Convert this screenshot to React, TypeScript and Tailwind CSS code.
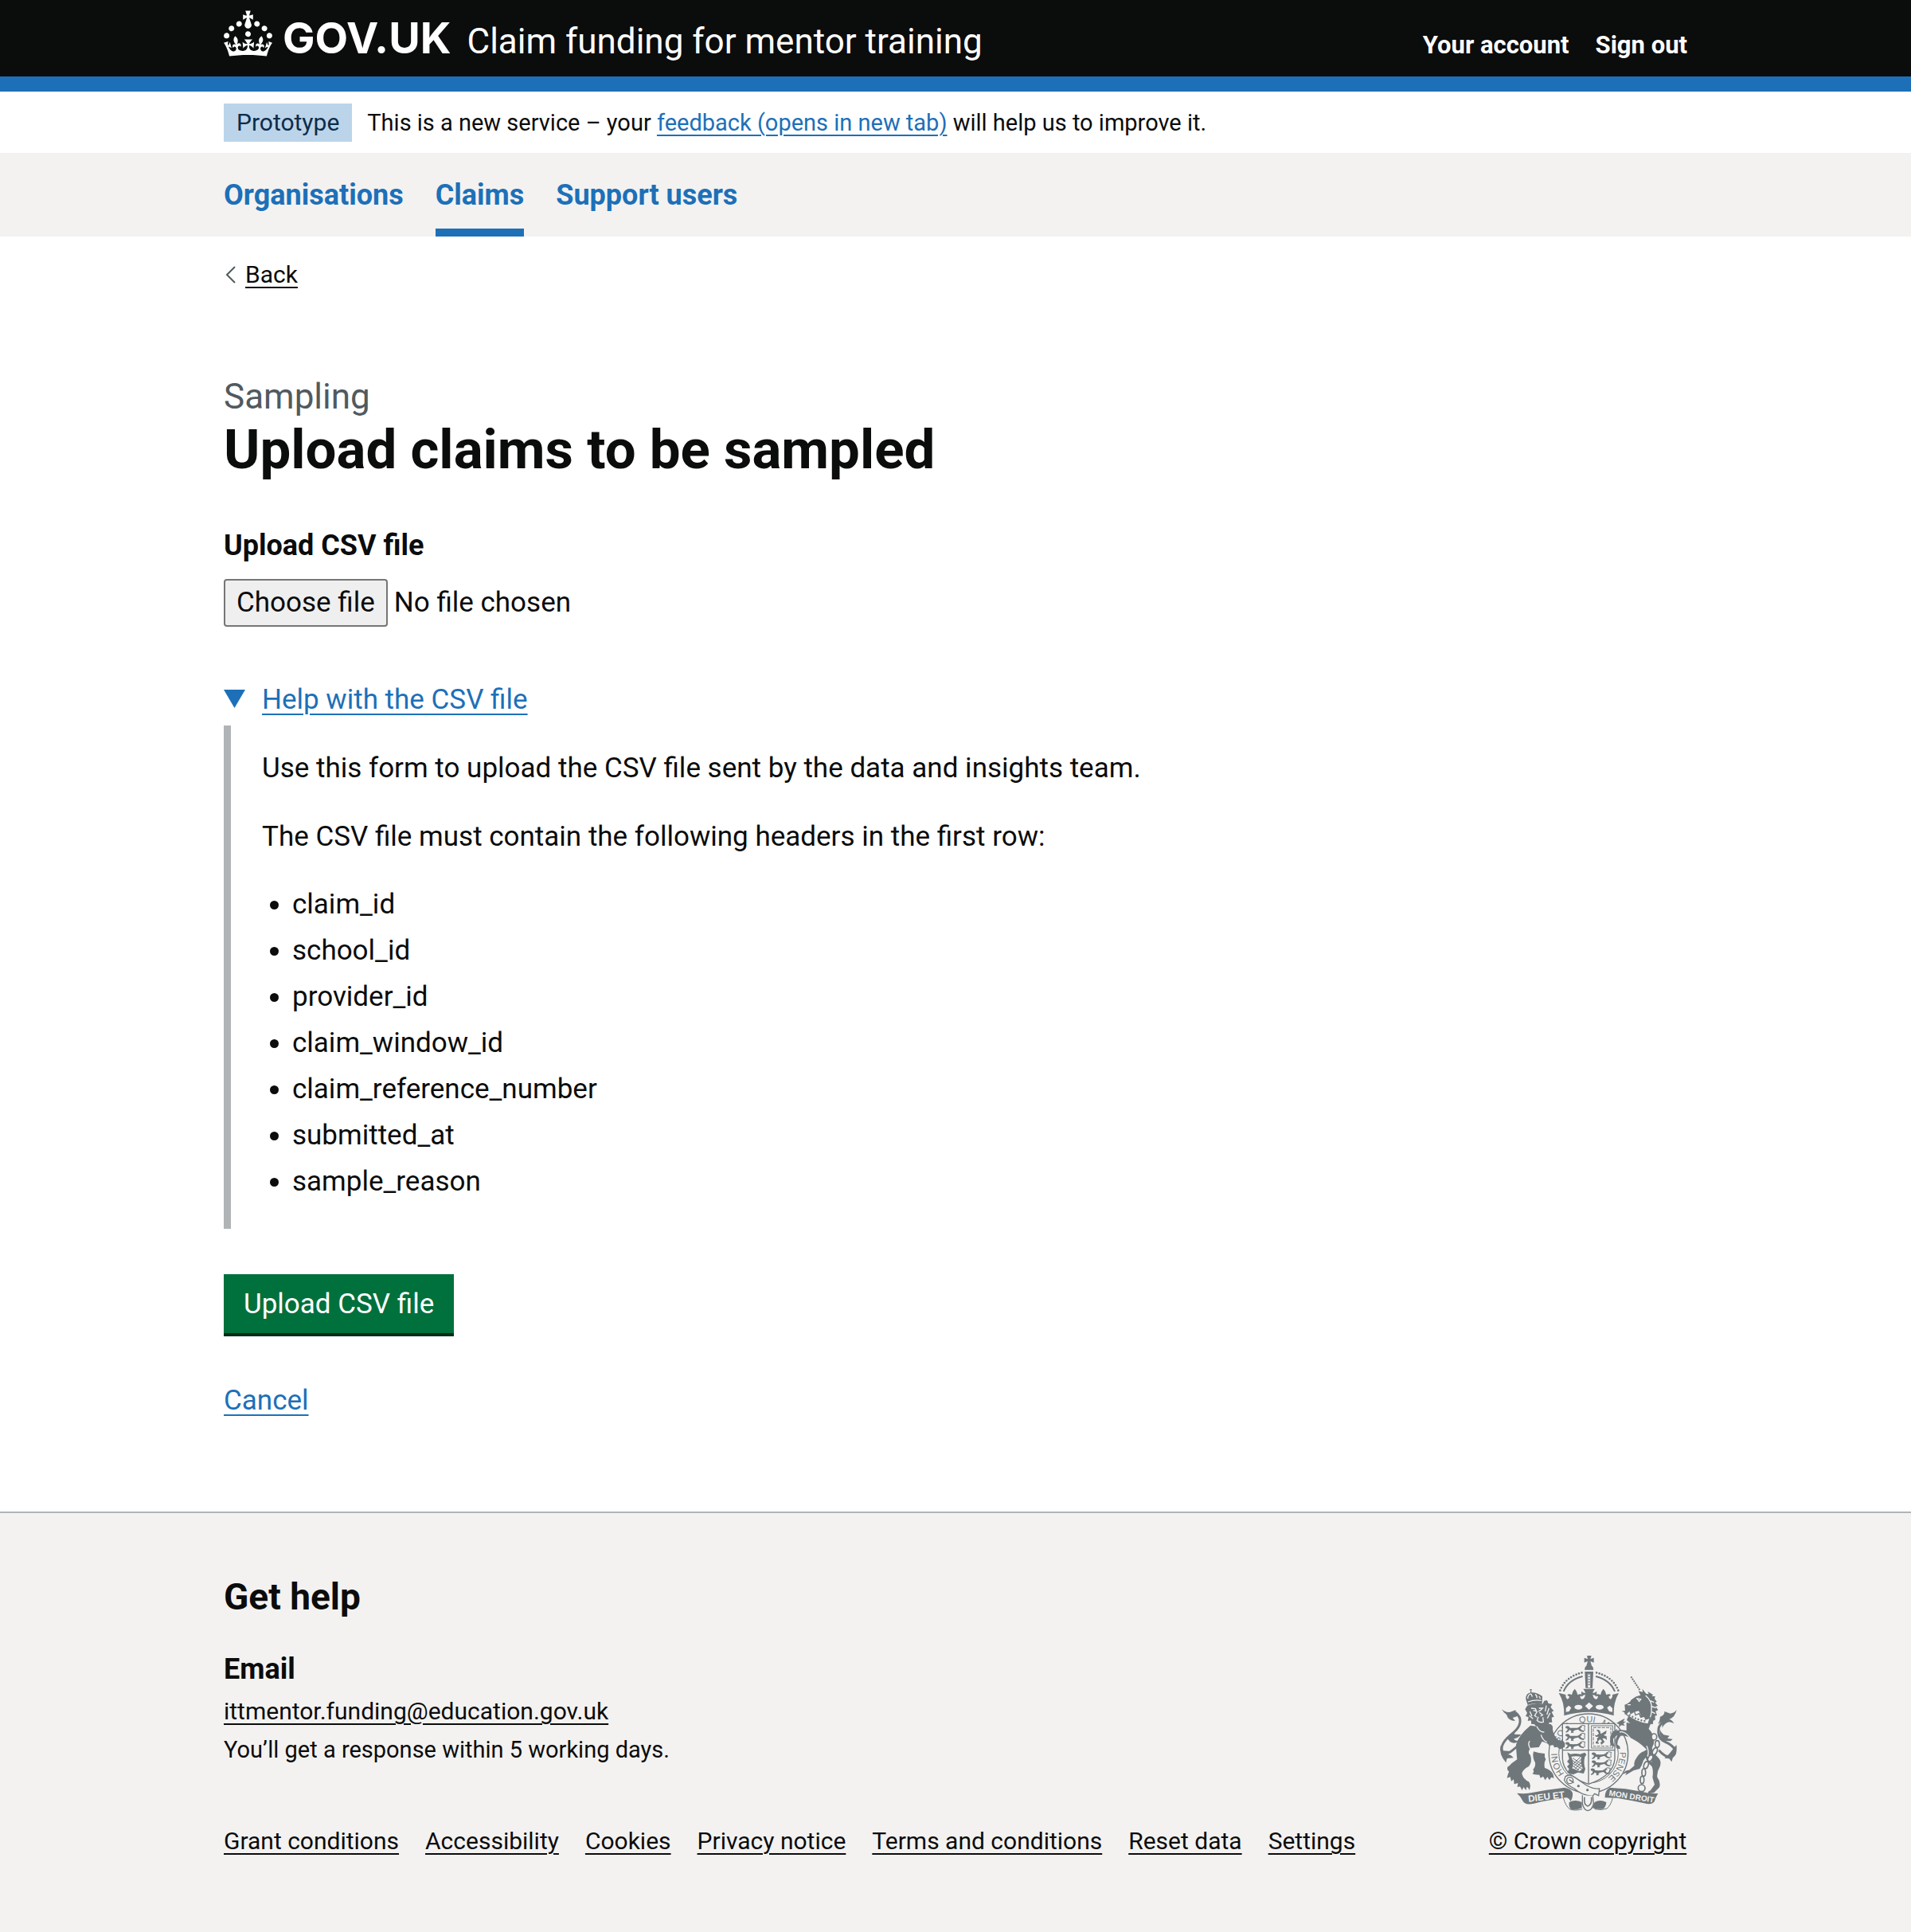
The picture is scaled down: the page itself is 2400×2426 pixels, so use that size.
import type { ReactNode } from "react";

const csvHeaders = [
  "claim_id",
  "school_id",
  "provider_id",
  "claim_window_id",
  "claim_reference_number",
  "submitted_at",
  "sample_reason",
];

const footerLinks = [
  "Grant conditions",
  "Accessibility",
  "Cookies",
  "Privacy notice",
  "Terms and conditions",
  "Reset data",
  "Settings",
];

const navItems = [
  { label: "Organisations", current: false },
  { label: "Claims", current: true },
  { label: "Support users", current: false },
];

function Container({ children, className = "" }: { children: ReactNode; className?: string }) {
  return <div className={`mx-auto w-full max-w-[1838px] ${className}`}>{children}</div>;
}

function CrownLogo() {
  return (
    <svg viewBox="0 0 32 30" className="-mt-[5px] h-[58px] w-[61px] shrink-0 self-start fill-white" aria-hidden="true">
      <path d="M22.6 10.4c-1 .4-2-.1-2.4-1-.4-.9.1-2 1-2.4.9-.4 2 .1 2.4 1s-.1 2-1 2.4m-5.9 6.7c-.9.4-2-.1-2.4-1-.4-.9.1-2 1-2.4.9-.4 2 .1 2.4 1s-.1 2-1 2.4m10.8-3.7c-1 .4-2-.1-2.4-1-.4-.9.1-2 1-2.4.9-.4 2 .1 2.4 1s0 2-1 2.4m3.3 4.8c-1 .4-2-.1-2.4-1-.4-.9.1-2 1-2.4.9-.4 2 .1 2.4 1s-.1 2-1 2.4M17 4.7l2.3 1.2V2.5l-2.3.7-.2-.2.9-3h-3.4l.9 3-.2.2c-.1.1-2.3-.7-2.3-.7v3.4L15 4.7c.1.1.1.2.2.2l-1.3 4c-.1.2-.1.4-.1.6 0 1.1.8 2 1.9 2.2h.7c1-.2 1.9-1.1 1.9-2.1 0-.2 0-.4-.1-.6l-1.3-4c-.1-.2 0-.2.1-.3m-7.6 5.7c.9.4 2-.1 2.4-1 .4-.9-.1-2-1-2.4-.9-.4-2 .1-2.4 1s0 2 1 2.4m-5 3c.9.4 2-.1 2.4-1 .4-.9-.1-2-1-2.4-.9-.4-2 .1-2.4 1s.1 2 1 2.4m-3.2 4.8c.9.4 2-.1 2.4-1 .4-.9-.1-2-1-2.4-.9-.4-2 .1-2.4 1s0 2 1 2.4m14.8 11c4.4 0 8.6.3 12.3.8 1.1-4.5 2.4-7 3.7-8.8l-2.5-.9c.2 1.3.3 1.9 0 2.7-.4-.4-.8-1.1-1.1-2.3l-1.2 4c.7-.5 1.3-.8 2-.9-1.1 2.5-2.6 3.1-3.5 3-1.1-.2-1.7-1.2-1.5-2.1.3-1.2 1.5-1.5 2.1-.1 1.1-2.3-.8-3-2-2.3 1.9-1.9 2.1-3.5.6-5.6-2.1 1.6-2.1 3.2-1.2 5.5-1.2-1.4-3.2-.6-2.5 1.6.9-1.4 2.1-.5 1.9.8-.2 1.1-1.7 2.1-3.5 1.9-2.7-.2-2.9-2.1-2.9-3.6.7-.1 1.9.5 2.9 1.9l.4-4.3c-1.1 1.1-2.1 1.4-3.2 1.4.4-1.2 2.1-3 2.1-3h-5.4s1.7 1.9 2.1 3c-1.1 0-2.1-.2-3.2-1.4l.4 4.3c1-1.4 2.2-2 2.9-1.9-.1 1.5-.2 3.4-2.9 3.6-1.9.2-3.4-.8-3.5-1.9-.2-1.3 1-2.2 1.9-.8.7-2.3-1.2-3-2.5-1.6.9-2.2.9-3.9-1.2-5.5-1.5 2-1.3 3.7.6 5.6-1.2-.7-3.1 0-2 2.3.6-1.4 1.8-1.1 2.1.1.2.9-.3 1.9-1.5 2.1-.9.2-2.4-.5-3.5-3 .6 0 1.2.3 2 .9l-1.2-4c-.3 1.1-.7 1.9-1.1 2.3-.3-.8-.2-1.4 0-2.7l-2.9.9C1.3 23 2.6 25.5 3.7 30c3.7-.5 7.9-.8 12.3-.8" />
    </svg>
  );
}

/* One walking lion of the English quarters, drawn in a 84 × 28 box. */
function PassantLion({ x, y }: { x: number; y: number }) {
  return (
    <g transform={`translate(${x} ${y})`}>
      <path d="M3 3q8-5 14 0l3 5q14 1 28 0l10-5q8-3 8 3-5 0-7 4l4 6 10 3-2 5-12-3-8-7-14 3-6 6 5 3-12 1 1-8-7-3-5 7-9 3 1-5 5-3 1-7-7-2z" />
      <path d="M57 3q8-8 20-3-3 8-2 12 3 6-3 10" fill="none" stroke="#6f777b" strokeWidth="3" />
    </g>
  );
}

/* Start of each motto word, measured along the garter's text path. */
const garterWords = [
  { word: "HONI", offset: 37 },
  { word: "SOIT", offset: 158 },
  { word: "QUI", offset: 270 },
  { word: "MAL", offset: 352 },
  { word: "PENSE", offset: 484 },
];

function RoyalArms() {
  const ink = "#6f777b";
  const paper = "#f3f2f1";
  return (
    <svg viewBox="57 43 750 603" className="h-auto w-full" fill={ink} role="img" aria-label="Royal coat of arms">
      {/* Orb and cross */}
      <path d="M429 52h17l-4 13 13-5v18l-13-5 5 17q8 6 6 17h-32q-2-11 6-17l5-17-13 5V60l13 5z" />
      <path d="M422 107h31" stroke={paper} strokeWidth="2" />
      {/* Arches */}
      <path d="M328 183Q350 128 419 114M547 183Q525 128 456 114" fill="none" stroke={ink} strokeWidth="8" strokeLinecap="round" strokeDasharray="0 11" />
      <path d="M341 187Q358 144 413 130M534 187Q517 144 462 130" fill="none" stroke={ink} strokeWidth="6" />
      <path d="M421 112h32l-3 62h-26z" />
      <path d="M437 120v52" stroke={paper} strokeWidth="9" />
      <path d="M437 121v50" stroke={ink} strokeWidth="6" strokeLinecap="round" strokeDasharray="0 10" />
      {/* Crown rim, crosses and fleurs */}
      <path d="M325 193l24 6q-1 12 7 17 7-3 7-10-6-2-8-7 8-5 17 1 1-13 11-23 10 10 11 23 9-6 17-1-2 5-8 7 1 9 8 10 10-2 12-17-8 1-14 8l-1-21q8 7 15 7-1-7-8-16h44q-7 9-8 16 7 0 15-7l-1 21q-6-7-14-8 2 15 12 17 7-1 8-10-6-2-8-7 8-5 17 1 1-13 11-23 10 10 11 23 9-6 17-1-2 5-8 7 0 7 7 10 8-5 7-17l24-6q-21 35-19 85-91-27-187 0 2-50-20-85z" />
      <path d="M437 228l15 14-15 14-15-14zM350 250l10-10 10 8-8 14-12 2zM525 250l-10-10-10 8 8 14 12 2z" fill={paper} />
      <ellipse cx="397" cy="246" rx="15" ry="9" fill={paper} />
      <ellipse cx="477" cy="246" rx="15" ry="9" fill={paper} />

      {/* Garter */}
      <circle cx="435" cy="420" r="149" fill={paper} stroke={ink} strokeWidth="4" />
      <circle cx="435" cy="420" r="112" fill="none" stroke={ink} strokeWidth="3" />
      <path id="garter-motto" d="M372 520A118 118 0 1 1 466 534" fill="none" />
      {garterWords.map(({ word, offset }) => (
        <text key={word} fontFamily="Liberation Sans" fontSize="33" fill={ink}>
          <textPath href="#garter-motto" startOffset={offset}>
            {word}
          </textPath>
        </text>
      ))}

      {/* Shield */}
      <path d="M337 308H534V440Q530 505 435 536 340 505 337 440Z" fill={paper} stroke={ink} strokeWidth="4" />
      <path d="M435 308V534M337 408H534" stroke={ink} strokeWidth="4" />
      <PassantLion x={345} y={316} />
      <PassantLion x={345} y={346} />
      <PassantLion x={345} y={377} />
      <PassantLion x={444} y={416} />
      <PassantLion x={444} y={446} />
      <PassantLion x={440} y={476} />
      {/* Scottish quarter */}
      <rect x="446" y="316" width="80" height="84" fill="none" stroke={ink} strokeWidth="3" />
      <rect x="453" y="323" width="66" height="70" fill="none" stroke={ink} strokeWidth="3" strokeDasharray="12 4" />
      <path d="M464 333q10-6 15 4l2 10 13-8 9-6-2 13-9 5 11 5 1 14-8-7-9 1 9 13-13 11-3-8 6-6-8-7-8 8 5 9-13-1 0-6 6-4-1-9 7-7-10 1-6-7 8 1 8-6-4-8z" />
      {/* Harp */}
      <path d="M355 416l12 7q20-4 36 0l18-6 6 8-6 9q-6 24 2 45l-6 17-22-4-18 8-22-7 7-14-8-9 9-10-9-9 8-10z" />
      <path d="M370 432q24-4 38 2-5 20 5 43l-12 11-28-12q10-16-3-44z" fill={paper} />
      <path d="M376 438l32 22M373 446l37 24M376 457l34 22M376 468l24 16M404 434l-26 26M409 440l-31 32M411 450l-28 30M413 462l-21 22" stroke={ink} strokeWidth="3" />

      {/* Garter strap and buckle */}
      <path d="M348 507q15-10 30 0l50 34q25 14 48 12l-3 26-15-7-8 9q-40-2-68-28-34-18-38-32z" fill={paper} stroke={ink} strokeWidth="4" />
      <circle cx="365" cy="522" r="12" fill="none" stroke={ink} strokeWidth="4" />
      <path d="M362 519l18 12" stroke={ink} strokeWidth="4" />
      <circle cx="397" cy="543" r="5" />
      <circle cx="431" cy="558" r="5" />
      <path d="M412 578v32q6 24 20 26 16-2 22-26l-3-30" fill={paper} stroke={ink} strokeWidth="4" />
      <path d="M420 585q-4 30 12 34 17-6 14-34" fill="none" stroke={ink} strokeWidth="5" />

      {/* Lion: tail */}
      <path d="M160 266C188 288 180 318 152 342 126 362 100 388 110 414 122 438 158 402 206 358" fill="none" stroke={ink} strokeWidth="9" />
      <path d="M108 253q14 14 30 12 14-5 22-8l3 15q15 14 18 30l-14-22-18 6 10 12q-26 0-33-24-12-8-18-21zM127 362q20-6 26-26l4 12 24 1q-12 14-27 16 4 10 20 8-16 14-34 4zM104 390q-8 32 20 65l4-16 24-2q-8-13-24-13l12-12-26-2z" />
      {/* Lion: crown */}
      <path d="M214 178h7v5h-7zM216 185h4v8h-4zM199 217q-2-22 18-26 24-2 44 14l-1 29q-30-6-54 4z" />
      <path d="M206 214q0-14 10-18M223 207q-2-8-6-12M240 212q2-10-6-14M252 214q2-4-4-9M207 226q24-9 50-5" fill="none" stroke={paper} strokeWidth="4" />
      {/* Lion: mane and face */}
      <path d="M204 240q28-12 58-6l6-12 11-2 5 12 14 2-6 12 12 14-8 4 9 18-9 3 2 18-12 1-4 18-10-6-6 14-24-8-12-12-10 0-2-14-12 2 3-14-11-4 6-12-8-14z" />
      <path d="M219 250l16 2 4 10-12-4M248 250l14 0-8 8-8 4M242 262l-10 16 8 6M250 266l12 10-8 4M246 282l-5 14q10 10 24 6l-2-18M276 240l-4 22M286 250l-8 24M290 268l-10 20M214 262l8 18M212 278l14 12" fill="none" stroke={paper} strokeWidth="4" />
      {/* Lion: body */}
      <path d="M238 318q24-20 54-8 10 4 8 20 4 26 22 40l18 4q10 8 4 24-10-2-10 6-12 0-16-8l-12 2-4-9-14 2-8-8-20-8-12 22-30 2q-16 18-2 28 8 26-6 42-24 12-26 28 6 22 26 30 10 12 2 32-4-12-10-12l-2 12-10-12-5 12-8-14-10 2 2-15-14 4-2-18-9 7-4-16-12 4q4-20 8-24-10-8-6-18 8-4 16-14 12-8 20-14-4-38-4-56 10-36 54-72z" />
      <path d="M228 413q22 8 42 8-2 12 4 22-8 14-4 32 18 6 26 16 8 8 8 24-6-6-10-4l-6 10-8-12-8 12-8-14-10 6-4-12q-20 0-27-4 9-6 3-16 10-10 8-26-12-20-6-42z" />
      <path d="M216 404q-12-22-2-30M256 350q6 20 22 28M240 318q10 22 28 22" fill="none" stroke={paper} strokeWidth="4" />

      {/* Unicorn: horn, head and mane */}
      <path d="M595 131l34 52" stroke={ink} strokeWidth="6" strokeDasharray="6 3" />
      <path d="M571 237q20-8 24-18 18-16 36-18l-8-16 16 4-1-12 14 18 10 2-4-10 20 12-4 6 12 0-2 10 8 10-6 4 10 12-8 2 9 14-9 4 5 16-8 2 2 14-8 4-2 14-8-2-8 20-18-6q-48-6-64-29l9-20q14-2 22 0 14 4 22 2l-8-16q-14 4-28 7-14 6-24 6l-2-8-11-4 14-2z" />
      <path d="M618 214l14 2-6 8zM582 237l12 0M650 202q26 22 22 50 2 24-10 44M668 222l14 6M674 244l16 4M674 264l12 6" fill="none" stroke={paper} strokeWidth="4" />
      <path d="M576 272l14-14 4 12 14-8 4 14 14-6 6 14 14-4 4 12 17-6-7 24q-50-6-84-38z" fill={paper} stroke={ink} strokeWidth="4" />
      <path d="M590 276q36 22 66 23" fill="none" stroke={ink} strokeWidth="7" strokeLinecap="round" strokeDasharray="0 12" />
      <path d="M558 296l14-8-6 12 10 0-10 8 6 8-14-2-8 8 0-12-10-4z" />
      {/* Unicorn: body and legs */}
      <path d="M578 304q38 6 66 8 32 24 38 50 2 22-8 38 4 18 20 32 20 18 8 42-10 16-8 36 14 18 8 38l-20 20-22 4q-4-8 8-12l16-22-8-28q4-24-2-40-20-18-24-34-10 10-14 28l-8 14-24 7-30 18 4-10-14 6q8-16 24-16l20-17q-4-12 6-26 12-22 30-28l10-6q-22-24-52-40-26-14-46-12-14 18-12 34 12 4 10 16l-14-3q-8-32 4-50-14 10-16 14-2 12 6 30-10-2-16-8-6-32 10-50 24-8 50-3z" />
      <path d="M592 362q-22-28-40-22M654 392q10 20 4 40M672 452q-4-18-16-24" fill="none" stroke={paper} strokeWidth="4" />
      {/* Unicorn: tail */}
      <path d="M700 408Q724 436 748 434 768 422 758 402 744 384 722 376 692 362 700 322 712 298 742 280" fill="none" stroke={ink} strokeWidth="9" />
      <path d="M767 256q-8 12-24 14l-22-8q2 14-16 20 0 12-8 28l14-10 2 24q10-20 26-22 12 2 18 6-6-14-18-16 22-8 28-36zM704 330q-4 22 14 42l26 2 8-8-20-2 8-10-22-4q-10-8-14-20zM766 388q4 22-4 34-10 12-14 30l-9-12-18-2 18-16z" />
      {/* Chain */}
      <g fill={paper} stroke={ink} strokeWidth="5">
        <ellipse cx="682" cy="358" rx="10" ry="12" />
        <ellipse cx="694" cy="385" rx="8" ry="13" />
        <ellipse cx="685" cy="412" rx="8" ry="14" transform="rotate(25 685 412)" />
        <ellipse cx="668" cy="438" rx="8" ry="13" transform="rotate(30 668 438)" />
        <ellipse cx="652" cy="464" rx="8" ry="14" transform="rotate(20 652 464)" />
        <ellipse cx="643" cy="492" rx="7" ry="14" />
        <ellipse cx="637" cy="520" rx="7" ry="14" />
        <circle cx="635" cy="551" r="13" />
      </g>

      {/* Motto scroll */}
      <path d="M340 588q10 32 24 42 20 8 48 0M526 588q-8 30-22 40-20 8-46 2" fill="none" stroke={ink} strokeWidth="3" />
      <path d="M362 604q22-12 48 0v22q-22 10-42 4-8-10-6-26zM502 604q-24-12-44 0l-8 22q24 8 42 2 10-10 10-24z" />
      <path d="M165 570q34 4 62-3l50-9 68-9q24 4 30 20 2 18-8 32-4-14-18-14-70 10-120 22-34 8-42-10-8-18-22-29z" />
      <path d="M697 571q-32 2-62-7l-60-10-60-5q-20 12-18 38l44 1 60 11 44 9q28 8 38-6 6-18 14-31z" />
      <text x="209" y="603" fontFamily="Liberation Sans" fontWeight="700" fontSize="35" fill={paper} transform="rotate(-7 209 603)">
        DIEU ET
      </text>
      <text x="511" y="579" fontFamily="Liberation Sans" fontWeight="700" fontSize="30" fill={paper} transform="rotate(9 511 579)">
        MON DROIT
      </text>
    </svg>
  );
}

export default function App() {
  return (
    <div className="min-h-screen bg-[#f3f2f1] text-[35px] leading-[48px] text-[#0b0c0c] antialiased [font-family:Roboto,Arial,sans-serif]">
      <header className="border-b-[19px] border-[#1d70b8] bg-[#0b0c0c] pt-[18px] pb-[15px] text-white">
        <Container className="flex items-baseline justify-between">
          <a href="#" className="flex items-baseline">
            <CrownLogo />
            <span className="ml-[13px] text-[54px] leading-[60px] font-bold [font-family:Inter,Arial,sans-serif]">GOV.UK</span>
            <span className="ml-[20px] text-[44px] leading-[57px]">Claim funding for mentor training</span>
          </a>
          <nav aria-label="Account" className="flex gap-[33px] text-[31px] leading-[38px] font-bold">
            <a href="#">Your account</a>
            <a href="#">Sign out</a>
          </nav>
        </Container>
      </header>

      <div className="bg-white pt-[15px] pb-[14px] text-[29px]">
        <Container className="flex items-center gap-[19px]">
          <strong className="bg-[#bbd4ea] px-4 text-[30px] font-normal text-[#0c2d4a]">Prototype</strong>
          <span>
            This is a new service – your{" "}
            <a href="#" className="text-[#1d70b8] underline decoration-2 underline-offset-[5px]">
              feedback (opens in new tab)
            </a>{" "}
            will help us to improve it.
          </span>
        </Container>
      </div>

      <nav aria-label="Primary" className="bg-[#f3f2f1]">
        <Container className="flex gap-10 text-[36px] font-bold text-[#1d70b8]">
          {navItems.map((item) => (
            <a
              key={item.label}
              href="#"
              aria-current={item.current ? "page" : undefined}
              className={`border-b-[10px] pt-[29px] pb-[18px] ${item.current ? "border-[#1d70b8]" : "border-transparent"}`}
            >
              {item.label}
            </a>
          ))}
        </Container>
      </nav>

      <div className="bg-white">
        <Container className="pt-[29px] pb-[115px]">
          <a href="#" className="flex w-fit items-center text-[30px] leading-[38px]">
            <svg viewBox="0 0 27 38" className="h-[38px] w-[27px] fill-none stroke-[#505a5f] stroke-2" aria-hidden="true">
              <path d="M14 9 4 19l10 10" />
            </svg>
            <span className="underline decoration-2 underline-offset-[5px]">Back</span>
          </a>

          <main className="pt-[106px]">
            <h1>
              <span className="block text-[44px] leading-[57px] text-[#505a5f]">Sampling</span>
              <span className="block text-[69px] leading-[76px] font-bold">Upload claims to be sampled</span>
            </h1>

            <form className="mt-[58px]">
              <label htmlFor="csv" className="block text-[36px] font-bold">
                Upload CSV file
              </label>
              <div className="relative mt-[18px] flex w-fit items-center gap-2">
                <span className="rounded-[4px] border-2 border-[#767676] bg-[#efefef] px-[14px] py-1">Choose file</span>
                <span>No file chosen</span>
                <input id="csv" type="file" className="absolute inset-0 cursor-pointer opacity-0" />
              </div>

              <details open className="mt-[68px]">
                <summary className="flex w-fit cursor-pointer list-none items-center text-[#1d70b8]">
                  <svg viewBox="0 0 48 48" className="h-[48px] w-[48px] fill-current" aria-hidden="true">
                    <path d="M0 11h27L13.500 34z" />
                  </svg>
                  <span className="underline decoration-2 underline-offset-[6px]">Help with the CSV file</span>
                </summary>
                <div className="mt-2 border-l-[9px] border-[#b1b4b6] pt-[30px] pb-[35px] pl-[39px]">
                  <p>Use this form to upload the CSV file sent by the data and insights team.</p>
                  <p className="mt-[38px]">The CSV file must contain the following headers in the first row:</p>
                  <ul className="mt-[37px] flex list-disc flex-col gap-[10px] pl-[38px]">
                    {csvHeaders.map((name) => (
                      <li key={name}>{name}</li>
                    ))}
                  </ul>
                </div>
              </details>

              <button type="submit" className="mt-[57px] block bg-[#00703c] px-[25px] pt-[14px] pb-3 text-white shadow-[0_4px_0_#002d18]">
                Upload CSV file
              </button>
            </form>

            <p className="mt-[61px]">
              <a href="#" className="text-[#1d70b8] underline decoration-2 underline-offset-[6px]">
                Cancel
              </a>
            </p>
          </main>
        </Container>
      </div>

      <footer className="border-t-2 border-[#b1b4b6] pt-[77px] pb-[95px]">
        <Container className="flex items-end justify-between gap-9">
          <div>
            <h2 className="text-[46px] leading-[57px] font-bold">Get help</h2>
            <h3 className="mt-[38px] text-[36px] font-bold">Email</h3>
            <div className="mt-[5px]">
              <p className="text-[30px]">
                <a href="#" className="underline decoration-2 underline-offset-[5px]">
                  ittmentor.funding@education.gov.uk
                </a>
              </p>
              <p className="text-[29px]">You’ll get a response within 5 working days.</p>
            </div>
            <ul className="mt-[72px] flex flex-wrap gap-x-[33px] text-[30px] leading-[38px]">
              {footerLinks.map((label) => (
                <li key={label}>
                  <a href="#" className="underline decoration-2 underline-offset-[5px]">
                    {label}
                  </a>
                </li>
              ))}
            </ul>
          </div>
          <a href="#" className="flex w-[250px] shrink-0 flex-col items-center gap-4 text-[30px] leading-[38px] whitespace-nowrap">
            <RoyalArms />
            <span className="underline decoration-2 underline-offset-[5px]">© Crown copyright</span>
          </a>
        </Container>
      </footer>
    </div>
  );
}
